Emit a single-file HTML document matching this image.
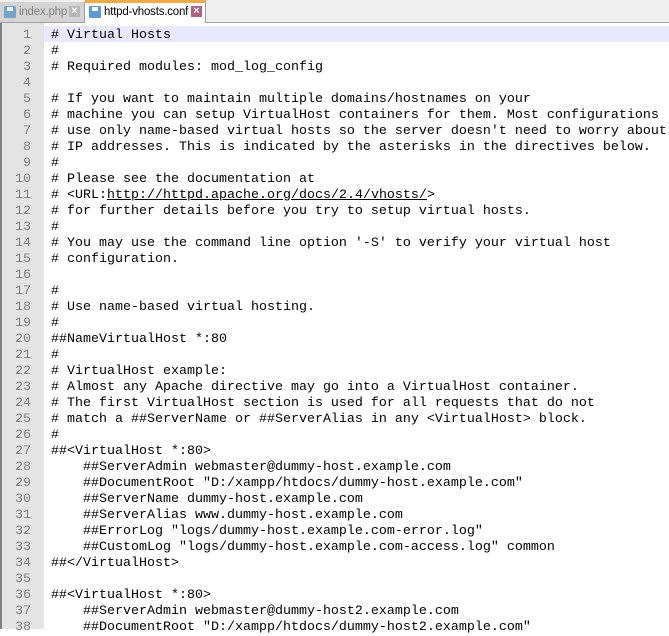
<!DOCTYPE html><html><head><style>
body{margin:0;width:669px;height:629px;overflow:hidden;background:#fff;font-family:"Liberation Sans",sans-serif;position:relative}
.bar{position:absolute;left:0;top:0;width:669px;height:22px;background:#f0f0f0;border-bottom:1px solid #a0a0a0}
.tab{position:absolute;top:2px;height:20px;font-size:11.5px;line-height:20px;letter-spacing:-0.2px}
.t1{left:0;width:84px;background:#d4d4d4;color:#808080;border-right:1px solid #a0a0a0}
.t2{left:85px;top:0;height:23px;width:121px;background:#fff;color:#000;border-top:3px solid #f8a840;box-sizing:border-box;border-right:1px solid #a0a0a0;line-height:18px}
.ico{position:absolute;left:4px;top:4px;width:12px;height:12px;background:#4a8fd0;border-radius:1px}
.ico:after{content:"";position:absolute;left:3px;top:1px;width:6px;height:4px;background:#fff}
.x{position:absolute;width:11px;height:11px;font-size:11px;line-height:11px;text-align:center;color:#fff;font-weight:bold;letter-spacing:0}
.gut{position:absolute;left:0;top:23px;width:44px;height:606px;background:#e4e4e4;border-left:2px solid #808080;box-sizing:border-box}
.hl{position:absolute;left:44px;top:26px;width:625px;height:16px;background:#e8e8ff}
pre{margin:0;position:absolute;top:28px;font-family:"Liberation Mono",monospace;font-size:13.33px;line-height:16px}
.num{left:0;width:31px;text-align:right;color:#808080}
.code{left:51px;color:#000}
</style></head><body>
<div class="bar"></div>
<div class="tab t1"><span class="ico" style="opacity:.7"></span><span style="position:absolute;left:19px">index.php</span><span class="x" style="left:69px;top:4px;background:#b8b8b8">×</span></div>
<div class="tab t2"><span class="ico" style="top:3px;background:#5a9ad8"></span><span style="position:absolute;left:19px">httpd-vhosts.conf</span><span class="x" style="left:106px;top:3px;background:#b06080">×</span></div>
<div class="gut"></div>
<div class="hl"></div>
<pre class="num">1
2
3
4
5
6
7
8
9
10
11
12
13
14
15
16
17
18
19
20
21
22
23
24
25
26
27
28
29
30
31
32
33
34
35
36
37
38</pre>
<pre class="code"># Virtual Hosts
#
# Required modules: mod_log_config

# If you want to maintain multiple domains/hostnames on your
# machine you can setup VirtualHost containers for them. Most configurations
# use only name-based virtual hosts so the server doesn't need to worry about
# IP addresses. This is indicated by the asterisks in the directives below.
#
# Please see the documentation at
# &lt;URL:<u>http://httpd.apache.org/docs/2.4/vhosts/</u>&gt;
# for further details before you try to setup virtual hosts.
#
# You may use the command line option '-S' to verify your virtual host
# configuration.

#
# Use name-based virtual hosting.
#
##NameVirtualHost *:80
#
# VirtualHost example:
# Almost any Apache directive may go into a VirtualHost container.
# The first VirtualHost section is used for all requests that do not
# match a ##ServerName or ##ServerAlias in any &lt;VirtualHost&gt; block.
#
##&lt;VirtualHost *:80&gt;
    ##ServerAdmin webmaster@dummy-host.example.com
    ##DocumentRoot "D:/xampp/htdocs/dummy-host.example.com"
    ##ServerName dummy-host.example.com
    ##ServerAlias www.dummy-host.example.com
    ##ErrorLog "logs/dummy-host.example.com-error.log"
    ##CustomLog "logs/dummy-host.example.com-access.log" common
##&lt;/VirtualHost&gt;

##&lt;VirtualHost *:80&gt;
    ##ServerAdmin webmaster@dummy-host2.example.com
    ##DocumentRoot "D:/xampp/htdocs/dummy-host2.example.com"</pre>
</body></html>
